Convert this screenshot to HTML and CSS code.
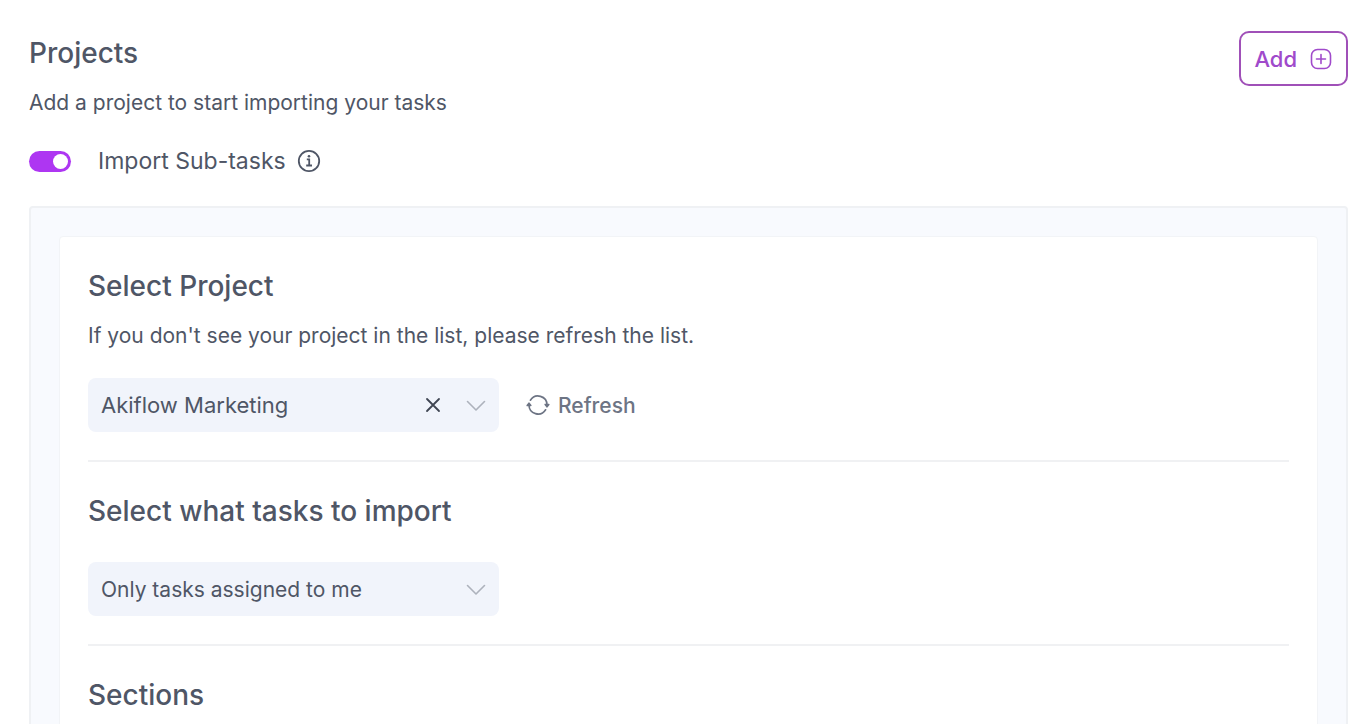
FILE: index.html
```html
<!DOCTYPE html>
<html lang="en">
<head>
    <meta charset="UTF-8">
    <meta name="viewport" content="width=device-width, initial-scale=1.0">
    <title>Projects</title>
    <link rel="stylesheet" href="styles.css">
</head>
<body>
    <header class="header">
        <div>
            <h1>Projects</h1>
            <p>Add a project to start importing your tasks</p>
        </div>
        <button class="add-btn" type="button">
            Add
            <svg width="22" height="22" viewBox="0 0 22 22" fill="none" stroke="currentColor" stroke-width="1.6" stroke-linecap="round">
                <rect x="1.5" y="1.5" width="19" height="19" rx="6"/>
                <path d="M11 6.5v9M6.5 11h9"/>
            </svg>
        </button>
    </header>

    <div class="toggle-row">
        <input type="checkbox" id="subtasks" class="toggle" checked>
        <label for="subtasks">Import Sub-tasks</label>
        <svg width="24" height="24" viewBox="0 0 24 24" fill="none" stroke="currentColor" stroke-width="1.8">
            <circle cx="12" cy="12" r="10.2"/>
            <path d="M9.8 10.4h2.4v6M9.2 16.5h5.8"/>
            <circle cx="12" cy="7.3" r="1.3" fill="currentColor" stroke="none"/>
        </svg>
    </div>

    <main class="panel">
        <div class="card">
            <section class="section">
                <h2><label for="project">Select Project</label></h2>
                <p>If you don't see your project in the list, please refresh the list.</p>
                <div class="field-row">
                    <div class="select-box">
                        <select id="project" class="select-large">
                            <option>Akiflow Marketing</option>
                        </select>
                        <button class="clear-btn" type="button" aria-label="Clear">
                            <svg width="16" height="16" viewBox="0 0 16 16" fill="none" stroke="currentColor" stroke-width="1.8" stroke-linecap="round">
                                <path d="M2 2l12 12M14 2L2 14"/>
                            </svg>
                        </button>
                        <svg class="chevron" width="20" height="12" viewBox="0 0 20 12" fill="none" stroke="currentColor" stroke-width="1.6" stroke-linecap="round" stroke-linejoin="round">
                            <path d="M1.5 1.5L10 10l8.5-8.5"/>
                        </svg>
                    </div>
                    <button class="refresh-btn" type="button">
                        <svg width="24" height="22" viewBox="0 0 24 22" fill="none" stroke="currentColor" stroke-width="1.6" stroke-linecap="round">
                            <path d="M4.4 6.2A9 9 0 0 1 21 11"/>
                            <path d="M3 11a9 9 0 0 0 16.6 4.8"/>
                            <path d="M19.2 10.5h3.6L21 12.8zM1.200 11.5h3.600L3 9.200z" fill="currentColor" stroke-linejoin="round"/>
                        </svg>
                        Refresh
                    </button>
                </div>
            </section>

            <section class="section">
                <h2><label for="tasks">Select what tasks to import</label></h2>
                <div class="field-row">
                    <div class="select-box">
                        <select id="tasks">
                            <option>Only tasks assigned to me</option>
                        </select>
                        <svg class="chevron" width="20" height="12" viewBox="0 0 20 12" fill="none" stroke="currentColor" stroke-width="1.6" stroke-linecap="round" stroke-linejoin="round">
                            <path d="M1.5 1.5L10 10l8.5-8.5"/>
                        </svg>
                    </div>
                </div>
            </section>

            <section class="section">
                <h2>Sections</h2>
            </section>
        </div>
    </main>
</body>
</html>
```
FILE: styles.css
```css
* {
    margin: 0;
    padding: 0;
    box-sizing: border-box;
    font-family: Inter, sans-serif;
}

body {
    height: 100vh;
    padding: 31px 18px 0 29px;
    overflow: hidden;
    background: #fff;
    color: #4f5666;
    font-size: 21px;
    line-height: 30px;
}

h1,
h2 {
    font-size: 28px;
    font-weight: 450;
    line-height: 40px;
}

button {
    border: none;
    background: none;
    cursor: pointer;
    display: flex;
    align-items: center;
}

svg {
    flex-shrink: 0;
}

.header {
    display: flex;
    justify-content: space-between;
    align-items: flex-start;
}

.header h1 {
    line-height: 44px;
    margin-bottom: 13px;
}

.add-btn {
    gap: 13px;
    height: 55px;
    padding: 0 14px 0 13px;
    border: 2px solid #a050b8;
    border-radius: 10px;
    color: #a04acb;
    font-size: 22px;
    font-weight: 500;
}

.toggle-row {
    display: flex;
    align-items: center;
    margin: 28px 0 30px;
    font-size: 23px;
}

.toggle {
    appearance: none;
    width: 42px;
    height: 21px;
    margin-right: 27px;
    padding: 3px;
    border-radius: 11px;
    background: #d5d8e0;
    display: flex;
}

.toggle::before {
    content: "";
    width: 15px;
    height: 15px;
    border-radius: 50%;
    background: #fff;
}

.toggle:checked {
    background: #ae36f2;
    justify-content: flex-end;
}

.toggle-row svg {
    margin-left: 11px;
}

.panel {
    padding: 28px;
    border: 2px solid #eff1f4;
    border-radius: 4px;
    background: #f8fafe;
}

.card {
    padding: 0 28px;
    border: 1px solid #f2f4f7;
    border-radius: 4px;
    background: #fff;
}

.section {
    padding: 29px 0 28px;
    border-bottom: 2px solid #f0f1f3;
}

.section:last-child {
    border-bottom: none;
}

.section p {
    margin-top: 15px;
}

.field-row {
    display: flex;
    align-items: center;
    gap: 27px;
    margin-top: 31px;
}

.section p + .field-row {
    margin-top: 27px;
}

.select-box {
    position: relative;
    width: 411px;
}

.select-box select {
    appearance: none;
    display: block;
    width: 100%;
    height: 54px;
    padding: 0 80px 0 13px;
    border: none;
    border-radius: 8px;
    background: #f1f4fb;
    color: #4f5666;
    font-size: 21px;
}

.select-box .select-large {
    font-size: 22px;
}

/* icons lie over the select */
.clear-btn {
    position: absolute;
    top: 19px;
    right: 58px;
    color: #3f4552;
}

.chevron {
    position: absolute;
    top: 22px;
    right: 13px;
    color: #adb2bc;
    pointer-events: none;
}

.refresh-btn {
    gap: 8px;
    color: #6d7484;
    font-size: 21px;
    font-weight: 500;
}
```
